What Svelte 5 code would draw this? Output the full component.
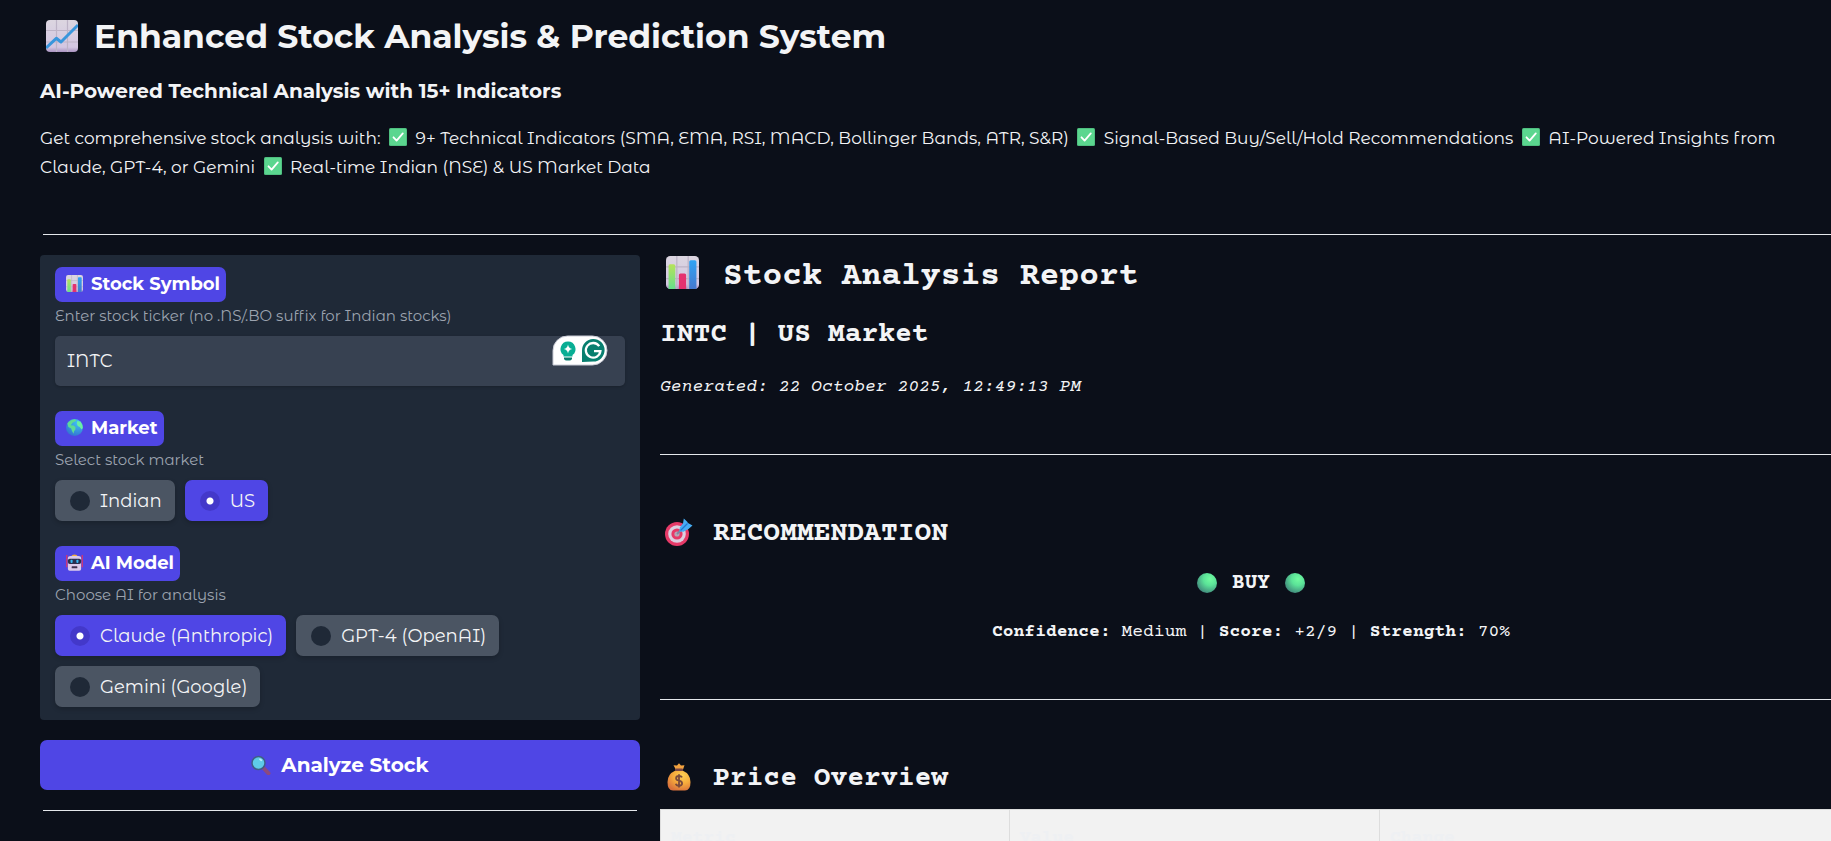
<script>
  let symbol = $state('INTC');
  let market = $state('US');
  let model = $state('Claude (Anthropic)');
  const markets = ['Indian', 'US'];
  const models = ['Claude (Anthropic)', 'GPT-4 (OpenAI)', 'Gemini (Google)'];
</script>

{#snippet tile()}
  <rect x="0" y="0" width="32" height="32" rx="4" fill="url(#tile)" />
  <path d="M10.5 0V32M21.5 0V32M0 10.5H32M0 22H32" stroke="#bdb3c6" stroke-width="1.2" fill="none" />
{/snippet}

{#snippet bars()}
  <svg class="icon" viewBox="0 0 32 32" aria-hidden="true">
    {@render tile()}
    <path d="M2.5 32V9.500q0-1.500 1.500-1.500h3.500q1.500 0 1.500 1.500V32z" fill="url(#lime)" />
    <path d="M12.500 32V18.500q0-1.500 1.500-1.500h4q1.500 0 1.500 1.500V32z" fill="#e5316f" />
    <path d="M22.500 32V5.500q0-1.500 1.500-1.500h4q1.500 0 1.500 1.500V32z" fill="url(#sky)" />
  </svg>
{/snippet}

{#snippet check()}
  <svg class="icon" viewBox="0 0 18 18" aria-hidden="true">
    <rect width="18" height="18" rx="1.500" fill="#4fbf80" />
    <rect x="1" y="1" width="16" height="16" rx="1" fill="#5bd68f" />
    <path d="M4.500 9.300L7.600 12.600L13.800 5.400" stroke="#fff" stroke-width="1.800" fill="none" stroke-linecap="round" stroke-linejoin="round" />
  </svg>
{/snippet}

{#snippet ball()}
  <svg class="icon" viewBox="0 0 20 20" aria-hidden="true"><circle cx="10" cy="10" r="10" fill="url(#ball)" /></svg>
{/snippet}

{#snippet choices(name, list, value, pick)}
  <div class="choices">
    {#each list as item}
      <label class="choice" class:on={item === value}>
        <input type="radio" {name} value={item} checked={item === value} onchange={() => pick(item)} />
        <span>{item}</span>
      </label>
    {/each}
  </div>
{/snippet}

<svg class="defs" aria-hidden="true">
  <defs>
    <linearGradient id="tile" x1="0" y1="0" x2="0" y2="1">
      <stop offset="0" stop-color="#dcd6e0" /><stop offset=".85" stop-color="#d3c6e2" /><stop offset="1" stop-color="#a993c0" />
    </linearGradient>
    <linearGradient id="lime" x1="0" y1="0" x2="0" y2="1">
      <stop offset="0" stop-color="#b6e35a" /><stop offset="1" stop-color="#66e08c" />
    </linearGradient>
    <linearGradient id="sky" x1="0" y1="0" x2="0" y2="1">
      <stop offset="0" stop-color="#30a4f4" /><stop offset="1" stop-color="#4579cf" />
    </linearGradient>
    <radialGradient id="ball" cx=".65" cy=".3" r=".8">
      <stop offset="0" stop-color="#72fba0" /><stop offset=".4" stop-color="#5be398" /><stop offset="1" stop-color="#3d7d78" />
    </radialGradient>
    <radialGradient id="sea" cx=".7" cy=".2" r=".9">
      <stop offset="0" stop-color="#3fc4f5" /><stop offset="1" stop-color="#3270cf" />
    </radialGradient>
    <radialGradient id="gold" cx=".65" cy=".25" r=".8">
      <stop offset="0" stop-color="#ffd052" /><stop offset=".5" stop-color="#f6ab3c" /><stop offset="1" stop-color="#d9703c" />
    </radialGradient>
  </defs>
</svg>

<div class="page">
  <div class="sheet">
    <header>
      <h1>
        <svg class="icon" viewBox="0 0 32 32" aria-hidden="true">
          {@render tile()}
          <path d="M0 28L10.300 18.300L15 22L32 5" stroke="#3996dc" stroke-width="3" fill="none" stroke-linejoin="round" />
        </svg>
        <span>Enhanced Stock Analysis &amp; Prediction System</span>
      </h1>
      <h2>AI-Powered Technical Analysis with 15+ Indicators</h2>
      <p>
        <span>Get comprehensive stock analysis with:</span>
        {@render check()} <span>9+ Technical Indicators (SMA, EMA, RSI, MACD, Bollinger Bands, ATR, S&amp;R)</span>
        {@render check()} <span>Signal-Based Buy/Sell/Hold Recommendations</span>
        {@render check()} <span>AI-Powered Insights from</span>
        <span class="keep">Claude, GPT-4, or Gemini</span>
        {@render check()} <span>Real-time Indian (NSE) &amp; US Market Data</span>
      </p>
    </header>
    <hr class="inset" />

    <div class="columns">
      <aside>
        <form class="panel" onsubmit={(e) => e.preventDefault()}>
          <section>
            <label class="tag" for="symbol">{@render bars()}Stock Symbol</label>
            <p class="info">Enter stock ticker (no .NS/.BO suffix for Indian stocks)</p>
            <div class="field">
              <input id="symbol" type="text" bind:value={symbol} />
              <svg class="helper" viewBox="0 0 56 31" aria-hidden="true">
                <path d="M1 30V15.500A14.500 14.500 0 0 1 15.500 1H40.500A14.500 14.500 0 0 1 40.500 30z" fill="#fff" stroke="#c9ccd6" />
                <path d="M16 6.500a7.500 7.500 0 0 0-4.500 13.500v1.500h9V20A7.500 7.500 0 0 0 16 6.500z" fill="#08ae94" />
                <path d="M12 22.500h8v1.500q-1 1.500-2.500 1.500h-3q-1.500 0-2.500-1.500z" fill="#087f6f" />
                <path d="M16 9.500Q16.600 13.400 20.200 14Q16.600 14.600 16 18.500Q15.400 14.600 11.800 14Q15.400 13.400 16 9.500z" fill="#fff" />
                <path d="M30 27V15.500A11.300 11.300 0 1 1 41.300 26.500z" fill="#087f6f" />
                <path d="M47.200 11.200A7.300 7.300 0 1 0 48.400 16.200H42" fill="none" stroke="#fff" stroke-width="2.300" />
              </svg>
            </div>
          </section>
          <section>
            <span class="tag">
              <svg class="icon" viewBox="0 0 18 18" aria-hidden="true">
                <circle cx="9" cy="9" r="9" fill="url(#sea)" />
                <path d="M1.500 4.500Q4.500 .6 9 .2L11 1L10 2.500L7 4L5 6.500L8 7L10 8.500L10 11L8.500 13L8 15.500L6.500 13L5.500 10L2.500 8.500z" fill="#5fdc95" />
                <path d="M12 2L15.500 3Q18 6.500 17.800 9.500L16.500 11L14.500 8.500L12.500 7.500L11.500 5z" fill="#6bf0a2" />
              </svg>Market
            </span>
            <p class="info">Select stock market</p>
            {@render choices('market', markets, market, (v) => (market = v))}
          </section>
          <section>
            <span class="tag">
              <svg class="icon" viewBox="0 0 18 18" aria-hidden="true">
                <path d="M.8 1V14M17.200 1V14" stroke="#d5356f" stroke-width="1.400" />
                <path d="M6 2.500Q6 .5 9 .5T12 2.500z" fill="#f2ad3c" />
                <path d="M2 4.500Q2 2 5 2H13Q16 2 16 4.500V16Q16 17.800 14 17.800H4Q2 17.800 2 16z" fill="#dccbea" />
                <rect x="2" y="5" width="14" height="5.500" rx="2" fill="#2b2e4e" />
                <rect x="4.800" y="6" width="2.200" height="3.500" rx="1" fill="#38b9f5" />
                <rect x="11" y="6" width="2.200" height="3.500" rx="1" fill="#38b9f5" />
                <rect x="6" y="13" width="6" height="2.200" rx=".5" fill="#40304f" />
              </svg>AI Model
            </span>
            <p class="info">Choose AI for analysis</p>
            {@render choices('model', models, model, (v) => (model = v))}
          </section>
        </form>
        <button type="button">
          <svg class="icon" viewBox="0 0 20 20" aria-hidden="true">
            <path d="M12.500 13L17.500 18.300" stroke="#8b4a80" stroke-width="4" stroke-linecap="round" />
            <circle cx="7.500" cy="8" r="6.500" fill="#5ecbe8" stroke="#3f5f86" stroke-width="1.500" />
            <ellipse cx="9.600" cy="4.800" rx="1.800" ry="1" fill="#b8eefa" transform="rotate(35 9.600 4.800)" />
          </svg>
          <span>Analyze Stock</span>
        </button>
        <hr class="inset" />
      </aside>

      <main>
        <h1>{@render bars()}<span>Stock Analysis Report</span></h1>
        <h2>INTC | US Market</h2>
        <p><em>Generated: 22 October 2025, 12:49:13 PM</em></p>
        <hr />
        <h2>
          <svg class="icon" viewBox="0 0 28 28" aria-hidden="true">
            <circle cx="12" cy="16" r="12" fill="#e63a68" />
            <circle cx="12" cy="16" r="8.800" fill="#dccfe0" />
            <circle cx="12" cy="16" r="5.600" fill="#e63a68" />
            <circle cx="12" cy="16" r="2.600" fill="#b7a6b6" />
            <path d="M12 16L20 8" stroke="#7c88a4" stroke-width="1.800" />
            <path d="M14.500 13.500L14.800 9.500L18 5.500L18.800 .5L22 3.500L23 5L27.500 7.500L23.500 11L18.500 13.800z" fill="#46adf4" />
            <path d="M15.500 12.500L22.500 5.500" stroke="#2275d2" stroke-width="1.200" />
          </svg>
          <span>RECOMMENDATION</span>
        </h2>
        <h3>{@render ball()}<span>BUY</span>{@render ball()}</h3>
        <p class="center"><strong>Confidence:</strong> Medium | <strong>Score:</strong> +2/9 | <strong>Strength:</strong> 70%</p>
        <hr />
        <h2>
          <svg class="icon" viewBox="0 0 28 28" aria-hidden="true">
            <path d="M10 5L8.500 2.200L12 2.500L14 .3L16 2.500L19.500 2.200L18 6.500H10.500z" fill="#f3a33f" />
            <path d="M2.500 19Q2.500 11 10.500 7.500H17.500Q25.500 11 25.500 19Q25.500 27.600 20 27.600H8Q2.500 27.600 2.500 19z" fill="url(#gold)" />
            <rect x="10" y="5.500" width="8" height="2.600" rx="1" fill="#7b4745" />
            <path d="M17.100 14.400Q16.300 13 14 13Q11.100 13 11.100 15.300Q11.100 17.200 14 17.700Q17.100 18.300 17.100 20.500Q17.100 22.700 14 22.700Q11.300 22.700 10.800 20.800M14 11.200V24.600" stroke="#7b4a3c" stroke-width="1.800" fill="none" />
          </svg>
          <span>Price Overview</span>
        </h2>
        <table>
          <thead><tr><th>Metric</th><th>Value</th><th>Change</th></tr></thead>
        </table>
      </main>
    </div>
  </div>
</div>

<style>
  :global(body) { background: #0b0f19; }
  .defs { position: absolute; width: 0; height: 0; }
  .page {
    box-sizing: border-box;
    height: 100vh;
    overflow: hidden;
    padding: 16px 0 0 40px;
    background: #0b0f19;
    color: #f3f4f6;
    font-family: "Montserrat Alternates", Montserrat, Inter, sans-serif;
    font-size: 18px;
  }
  .sheet { margin-right: -11px; }
  h1, h2, h3, p { margin: 0; }
  .icon { display: block; flex: none; }
  hr { height: 1px; border: 0; margin: 52px 0 0; background: #e5e7eb; }
  hr.inset { margin-left: 3px; margin-right: 3px; }

  header h1, header h2, .tag, button { font-family: Montserrat, Inter, sans-serif; }
  header h1 { display: flex; align-items: center; gap: 16px; padding-left: 6px; font-size: 33px; line-height: 40px; }
  header h1 .icon { width: 32px; height: 32px; }
  header h2 { margin-top: 21px; font-size: 20px; line-height: 28px; }
  header p { margin-top: 19px; font-size: 17px; line-height: 29px; }
  header p .icon { display: inline-block; width: 18px; height: 18px; margin: 0 4px; vertical-align: -2px; }
  .keep { white-space: nowrap; }

  .columns { display: grid; grid-template-columns: minmax(600px, 1fr) 2fr; gap: 20px; margin-top: 20px; }
  .panel { display: flex; flex-direction: column; gap: 25px; padding: 12px 15px 13px; border-radius: 4px; background: #1f2937; }
  .tag {
    display: flex; align-items: center; gap: 8px; width: fit-content; height: 35px; box-sizing: border-box;
    padding: 0 6px 2px 11px; border-radius: 7px; background: #4f46e5; color: #fff; font-weight: 700;
  }
  .tag .icon { width: 17px; height: 17px; }
  .info { margin-bottom: 7px; color: #9ca3af; font-size: 15px; line-height: 27px; }
  .field { position: relative; }
  .field input {
    display: block; box-sizing: border-box; width: 100%; height: 50px; padding: 0 12px; border: 0; border-radius: 5px;
    background: #374151; box-shadow: 0 1px 3px #0003; color: #f3f4f6; font: inherit;
  }
  .helper { position: absolute; top: -1px; right: 17px; width: 56px; height: 31px; }
  .choices { display: flex; flex-wrap: wrap; gap: 10px; }
  .choice {
    display: flex; align-items: center; gap: 10px; height: 41px; padding: 0 13px 0 15px; border-radius: 7px;
    background: #4b5563; box-shadow: 0 2px 5px #0003;
  }
  .choice input { appearance: none; box-sizing: border-box; width: 20px; height: 20px; margin: 0; border-radius: 50%; background: #1f2937; }
  .choice.on { background: #4f46e5; }
  .choice.on input { background: radial-gradient(circle, #fff 3px, #4338ca 4px); }
  button {
    display: flex; align-items: center; justify-content: center; gap: 10px; width: 100%; height: 50px; margin: 20px 0 0;
    border: 0; border-radius: 7px; background: #4f46e5; color: #fff; font-size: 20px; font-weight: 700;
  }
  button .icon { width: 20px; height: 20px; }
  aside hr { margin-top: 20px; }

  main { font-family: "Courier Prime", "Courier New", "Liberation Mono", monospace; }
  main h1, main h2 { display: flex; align-items: center; }
  main h1 { gap: 24px; font-size: 33px; line-height: 44px; }
  main h1 .icon { width: 33px; height: 33px; margin: -10px 0 0 6px; }
  main h2 { gap: 20px; margin-top: 18px; font-size: 28px; line-height: 36px; }
  main h2 .icon { width: 28px; height: 28px; margin: -5px 0 0 5px; }
  main p { margin-top: 20px; line-height: 28px; }
  main hr { margin-top: 53px; }
  main hr + h2 { margin-top: 61px; }
  main h3 { display: flex; align-items: center; justify-content: center; gap: 15px; margin-top: 18px; font-size: 21px; line-height: 28px; }
  h3 .icon { width: 20px; height: 20px; margin-top: -2px; }
  .center { text-align: center; }
  table { width: 100%; margin-top: 12px; border-collapse: collapse; table-layout: fixed; background: #f2f2f2; }
  th { height: 50px; box-sizing: border-box; padding: 6px 10px 0; border: 1px solid #ddd; color: #eef0f3; text-align: left; }
  th:nth-child(1) { width: 349px; }
  th:nth-child(2) { width: 370px; }
</style>
